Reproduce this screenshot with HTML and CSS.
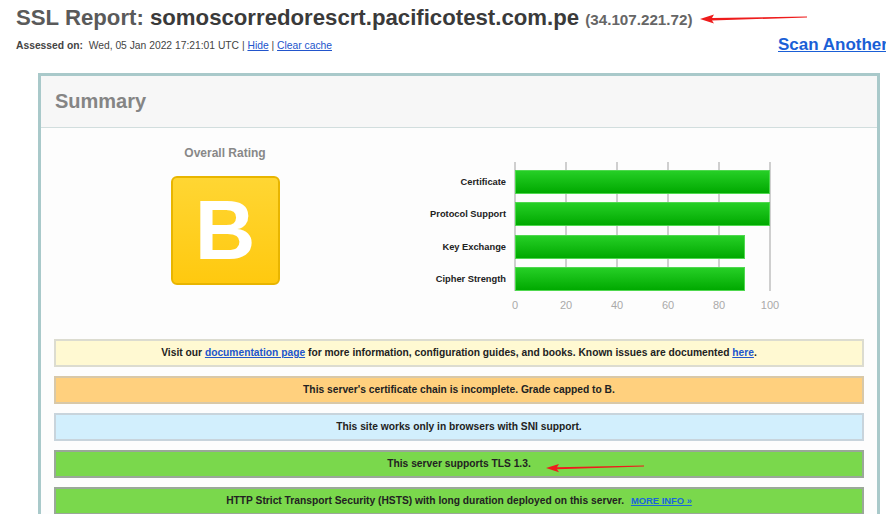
FILE: index.html
```html
<!DOCTYPE html>
<html>
<head>
<meta charset="utf-8">
<link rel="stylesheet" href="styles.css">
</head>
<body>
<div class="page">
  <div class="report-head">
    <h1 class="title"><span class="title-label">SSL Report:</span> somoscorredorescrt.pacificotest.com.pe <span class="ip">(34.107.221.72)</span></h1>
    <div class="meta-row">
      <div class="assessed"><b>Assessed on:</b>&nbsp; Wed, 05 Jan 2022 17:21:01 UTC | <a href="#">Hide</a> | <a href="#">Clear cache</a></div>
      <a class="scan" href="#">Scan Another &raquo;</a>
    </div>
    <svg class="arrow arrow-top" width="112" height="12" viewBox="0 0 112 12"><path d="M1 6 L15 1.5 L13 5 L108 3.6 L108 4.6 L13 7.4 L15 10.5 Z" fill="#ee1c1c"/></svg>
  </div>

  <div class="summary">
    <div class="summary-head">Summary</div>
    <div class="summary-body">
      <div class="rating-row">
        <div class="rating">
          <div class="rating-title">Overall Rating</div>
          <div class="grade">B</div>
        </div>
        <div class="chart">
          <div class="chart-labels">
            <div class="chart-label">Certificate</div>
            <div class="chart-label">Protocol Support</div>
            <div class="chart-label">Key Exchange</div>
            <div class="chart-label">Cipher Strength</div>
          </div>
          <div class="chart-main">
            <div class="plot">
              <div class="bar" style="width:255px"></div>
              <div class="bar" style="width:255px"></div>
              <div class="bar" style="width:229.5px"></div>
              <div class="bar" style="width:229.5px"></div>
            </div>
            <div class="axis">
              <span>0</span><span>20</span><span>40</span><span>60</span><span>80</span><span>100</span>
            </div>
          </div>
        </div>
      </div>

      <div class="notices">
        <div class="notice notice-info">Visit our <a href="#">documentation page</a> for more information, configuration guides, and books. Known issues are documented <a href="#">here</a>.</div>
        <div class="notice notice-warn">This server's certificate chain is incomplete. Grade capped to B.</div>
        <div class="notice notice-blue">This site works only in browsers with SNI support.</div>
        <div class="notice notice-good notice-arrowed">This server supports TLS 1.3.
          <svg class="arrow arrow-tls" width="102" height="10" viewBox="0 0 102 10"><path d="M1 5 L14 1 L12 4.2 L99 2.6 L99 3.6 L12 6.2 L14 9.2 Z" fill="#ee1c1c"/></svg>
        </div>
        <div class="notice notice-good">HTTP Strict Transport Security (HSTS) with long duration deployed on this server. <a class="more" href="#">MORE INFO &raquo;</a></div>
      </div>
    </div>
  </div>
</div>
</body>
</html>
```

FILE: styles.css
```css
html, body {
  margin: 0;
  padding: 0;
  background: #ffffff;
  overflow: hidden;
}

body {
  font-family: "Liberation Sans", Arial, sans-serif;
  color: #222;
  width: 886px;
  height: 514px;
}

.page {
  width: 886px;
}

.report-head {
  position: relative;
  padding: 4px 0 0 16px;
}

.title {
  margin: 0;
  font-size: 22.2px;
  line-height: 28px;
  font-weight: bold;
  color: #3a3a3a;
  white-space: nowrap;
}

.title-label {
  color: #5a5a5a;
}

.ip {
  font-size: 15.2px;
  color: #666;
}

.meta-row {
  display: grid;
  grid-template-columns: 762px auto;
  align-items: center;
  margin-top: 0;
  height: 22px;
  white-space: nowrap;
}

.assessed {
  font-size: 10.3px;
  color: #444;
}

.assessed b {
  color: #444;
}

.assessed a {
  color: #2255cc;
}

.scan {
  font-size: 17px;
  font-weight: bold;
  color: #1a5fd6;
  text-decoration: underline;
}

.arrow {
  position: absolute;
  display: block;
}

.arrow-top {
  left: 699px;
  top: 13px;
}

.summary {
  margin: 17px 0 0 38px;
  width: 836px;
  border: 3px solid #a9c9ca;
  border-bottom: none;
  background: #fdfdfd;
  height: 460px;
}

.summary-head {
  background: #f7f7f7;
  border-bottom: 1px solid #d2dede;
  height: 51px;
  line-height: 51px;
  padding-left: 14px;
  font-size: 20px;
  font-weight: bold;
  color: #858585;
}

.summary-body {
  padding: 0 13px 0 13px;
}

.rating-row {
  display: flex;
  align-items: flex-start;
}

.rating {
  width: 200px;
  margin-left: 71px;
  padding-top: 18px;
  display: flex;
  flex-direction: column;
  align-items: center;
}

.rating-title {
  font-size: 12px;
  line-height: 14px;
  font-weight: bold;
  color: #888;
}

.grade {
  margin-top: 16px;
  width: 105px;
  height: 105px;
  border: 2px solid #e8b500;
  border-radius: 6px;
  background: linear-gradient(#ffd633, #ffc90f);
  color: #fff;
  font-size: 84px;
  font-weight: bold;
  line-height: 105px;
  text-align: center;
}

.chart {
  display: flex;
  margin-top: 34px;
}

.chart-labels {
  width: 181px;
  padding-top: 8px;
  display: flex;
  flex-direction: column;
  gap: 8.3px;
}

.chart-label {
  height: 24px;
  line-height: 24px;
  text-align: right;
  font-size: 9.3px;
  font-weight: bold;
  color: #222;
  white-space: nowrap;
}

.chart-main {
  margin-left: 8px;
}

.plot {
  width: 257px;
  height: 129px;
  padding-top: 8px;
  box-sizing: border-box;
  background: repeating-linear-gradient(90deg, #cfcfcf 0 2px, transparent 2px 51px);
  display: flex;
  flex-direction: column;
  gap: 8.3px;
}

.bar {
  height: 24px;
  margin-left: 1px;
  box-sizing: border-box;
  border: 1px solid #4fd84f;
  background: linear-gradient(#26cf26, #00a900);
}

.axis {
  display: flex;
  margin-left: -24.5px;
  margin-top: 8px;
}

.axis span {
  width: 51px;
  text-align: center;
  font-size: 11px;
  line-height: 13px;
  color: #aaa;
}

.notices {
  margin-top: 27px;
  display: flex;
  flex-direction: column;
  gap: 9px;
}

.notice {
  position: relative;
  box-sizing: border-box;
  height: 28px;
  line-height: 14px;
  padding: 5px 6px;
  border: 2px solid #d6d6d6;
  text-align: center;
  font-size: 10.25px;
  font-weight: bold;
  color: #222;
  white-space: nowrap;
}

.notice a {
  color: #2255cc;
}

.notice-info {
  background: #fff9d2;
  border-color: #dcdcd0;
}

.notice-warn {
  background: #ffd07e;
  border-color: #d8c8a8;
}

.notice-blue {
  background: #d2effd;
  border-color: #c8d4dc;
}

.notice-good {
  background: #7ad84c;
  border-color: #9aa898;
}

.notice .more {
  font-size: 9.4px;
  margin-left: 4px;
  color: #1a66dd;
}

.arrow-tls {
  left: 489px;
  top: 11px;
}
```
